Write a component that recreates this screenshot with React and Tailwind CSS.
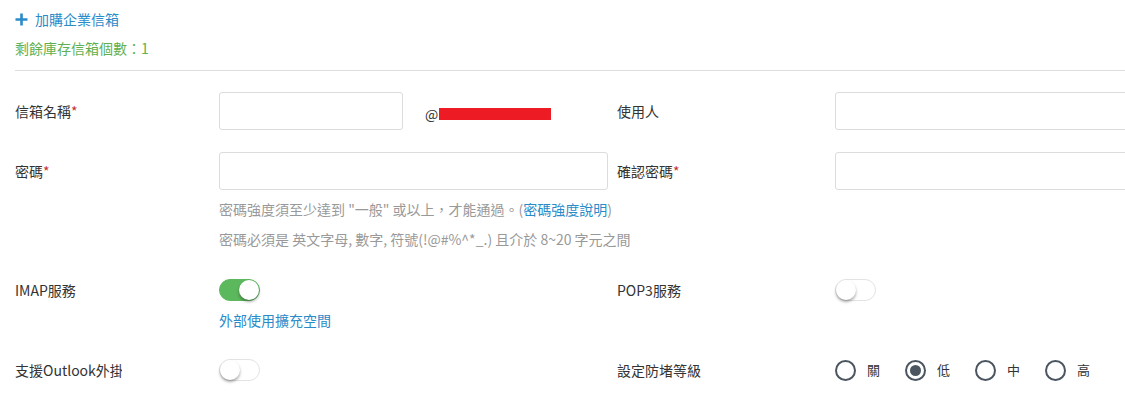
import React, { useState } from "react";

const font = { fontFamily: '"Noto Sans CJK TC", "Noto Sans", Arial, sans-serif' };

function Toggle({ on, onChange }) {
  return (
    <button
      type="button"
      onClick={() => onChange(!on)}
      className={`relative h-[22px] w-[41px] shrink-0 rounded-full border ${on ? "bg-[#5cb85c] border-[#5cb85c]" : "bg-white border-[#e3e3e3]"}`}
    >
      <span
        className={`absolute top-[0px] h-[20px] w-[20px] rounded-full bg-white shadow-[0_2px_3px_rgba(0,0,0,0.35)] ${on ? "left-[19px]" : "left-[0px]"}`}
      />
    </button>
  );
}

function Radio({ checked, label, onClick }) {
  return (
    <label onClick={onClick} className="flex items-center cursor-pointer">
      <span className="flex h-[21px] w-[21px] items-center justify-center rounded-full border-2 border-[#4a5560]">
        {checked && <span className="h-[11px] w-[11px] rounded-full bg-[#4a5560]" />}
      </span>
      <span className="ml-[11px] text-[13px] text-[#333]">{label}</span>
    </label>
  );
}

function Req() {
  return <span className="text-[#c9302c]">*</span>;
}

export default function App() {
  const [imap, setImap] = useState(true);
  const [pop3, setPop3] = useState(false);
  const [outlook, setOutlook] = useState(false);
  const [level, setLevel] = useState("低");

  const input = "h-[38px] shrink-0 rounded-[3px] border border-[#dcdcdc] bg-white px-3 outline-none";

  return (
    <div className="h-[411px] w-[1125px] overflow-hidden bg-white pl-[15px] text-[14px] text-[#333]" style={font}>
      <div className="flex items-center pt-[9px] leading-[20px] text-[#2a8bc9]">
        <svg width="13" height="13" viewBox="0 0 13 13" className="mr-[7px]">
          <path d="M6.5 0.5v12M0.5 6.5h12" stroke="#2a8bc9" strokeWidth="2.6" />
        </svg>
        <span>加購企業信箱</span>
      </div>
      <div className="mt-[9px] leading-[20px] text-[#5fb050]">剩餘庫存信箱個數：1</div>
      <div className="mt-[12px] h-px bg-[#dddddd]" />

      <div className="mt-[21px] flex h-[38px] items-center">
        <div className="flex w-[602px] shrink-0 items-center">
          <div className="w-[204px] shrink-0">信箱名稱<Req /></div>
          <input className={`${input} w-[184px]`} />
          <span className="ml-[22px] mt-[6px] flex items-center text-[#333]">
            @<span className="ml-[1px] inline-block h-[12px] w-[112px] bg-[#ed1c24]" />
          </span>
        </div>
        <div className="flex shrink-0 items-center">
          <div className="w-[218px] shrink-0">使用人</div>
          <input className={`${input} w-[320px]`} />
        </div>
      </div>

      <div className="mt-[22px] flex h-[38px] items-center">
        <div className="flex w-[602px] shrink-0 items-center">
          <div className="w-[204px] shrink-0">密碼<Req /></div>
          <input type="password" className={`${input} w-[389px]`} />
        </div>
        <div className="flex shrink-0 items-center">
          <div className="w-[218px] shrink-0">確認密碼<Req /></div>
          <input type="password" className={`${input} w-[320px]`} />
        </div>
      </div>

      <div className="ml-[204px] mt-[9px] leading-[20px] text-[#999]">
        密碼強度須至少達到 "一般" 或以上，才能通過。(<span className="text-[#2a8bc9]">密碼強度說明</span>)
      </div>
      <div className="ml-[204px] mt-[10px] leading-[20px] text-[#999]">
        密碼必須是 英文字母, 數字, 符號(!@#%^*_.) 且介於 8~20 字元之間
      </div>

      <div className="mt-[30px] flex items-start">
        <div className="flex w-[602px] shrink-0 items-start">
          <div className="w-[204px] shrink-0 leading-[22px]">IMAP服務</div>
          <div className="flex flex-col">
            <Toggle on={imap} onChange={setImap} />
            <span className="mt-[9px] leading-[20px] text-[#2a8bc9]">外部使用擴充空間</span>
          </div>
        </div>
        <div className="flex shrink-0 items-center">
          <div className="w-[218px] shrink-0 leading-[22px]">POP3服務</div>
          <Toggle on={pop3} onChange={setPop3} />
        </div>
      </div>

      <div className="mt-[29px] flex h-[22px] items-center">
        <div className="flex w-[602px] shrink-0 items-center">
          <div className="w-[204px] shrink-0">
            <div className="w-[107px] overflow-hidden whitespace-nowrap">支援Outlook外掛</div>
          </div>
          <Toggle on={outlook} onChange={setOutlook} />
        </div>
        <div className="flex shrink-0 items-center">
          <div className="w-[218px] shrink-0">設定防堵等級</div>
          <div className="flex items-center gap-[25px]">
            {["關", "低", "中", "高"].map((l) => (
              <Radio key={l} label={l} checked={level === l} onClick={() => setLevel(l)} />
            ))}
          </div>
        </div>
      </div>
    </div>
  );
}
